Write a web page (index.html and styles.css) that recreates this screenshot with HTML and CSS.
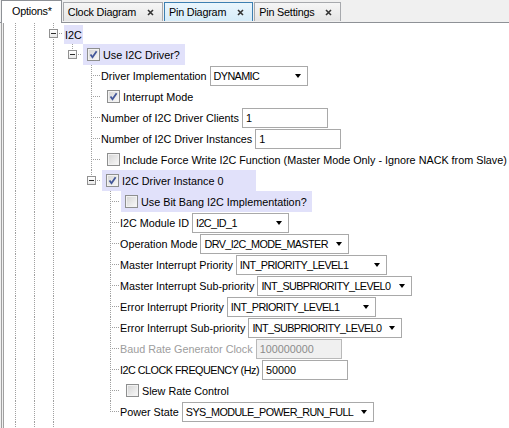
FILE: index.html
```html
<!DOCTYPE html>
<html lang="en">
<head>
    <meta charset="UTF-8">
    <title>Options</title>
    <link rel="stylesheet" href="styles.css">
</head>
<body>
    <div class="tabs">
        <div class="tab active">Options*</div>
        <div class="tab">Clock Diagram<svg class="close" width="7" height="7" viewBox="0 0 7 7"><path d="M1 1L6 6M6 1L1 6"/></svg></div>
        <div class="tab hover">Pin Diagram<svg class="close" width="7" height="7" viewBox="0 0 7 7"><path d="M1 1L6 6M6 1L1 6"/></svg></div>
        <div class="tab">Pin Settings<svg class="close" width="7" height="7" viewBox="0 0 7 7"><path d="M1 1L6 6M6 1L1 6"/></svg></div>
    </div>

    <div class="panel">
        <div class="tree">
            <div class="row"><i class="g v"></i><i class="g v"></i><i class="g t"><b class="exp"></b></i><span class="hl first">I2C</span></div>
            <div class="row"><i class="g v"></i><i class="g v"></i><i class="g v"></i><i class="g l"><b class="exp"></b></i>
                <span class="hl check"><b class="cb on"><svg width="11" height="11" viewBox="0 0 11 11"><path d="M2.5 5.5L4.5 8.2L8.6 2.3"/></svg></b>Use I2C Driver?</span></div>
            <div class="row"><i class="g v"></i><i class="g v"></i><i class="g v"></i><i class="g"></i><i class="g t"></i>
                <span class="label">Driver Implementation</span><span class="combo w98"><span>DYNAMIC</span><i class="arrow"></i></span></div>
            <div class="row"><i class="g v"></i><i class="g v"></i><i class="g v"></i><i class="g"></i><i class="g t"></i>
                <span class="check"><b class="cb on"><svg width="11" height="11" viewBox="0 0 11 11"><path d="M2.5 5.5L4.5 8.2L8.6 2.3"/></svg></b>Interrupt Mode</span></div>
            <div class="row"><i class="g v"></i><i class="g v"></i><i class="g v"></i><i class="g"></i><i class="g t"></i>
                <span class="label">Number of I2C Driver Clients</span><span class="field">1</span></div>
            <div class="row"><i class="g v"></i><i class="g v"></i><i class="g v"></i><i class="g"></i><i class="g t"></i>
                <span class="label">Number of I2C Driver Instances</span><span class="field">1</span></div>
            <div class="row"><i class="g v"></i><i class="g v"></i><i class="g v"></i><i class="g"></i><i class="g t"></i>
                <span class="check"><b class="cb"></b>Include Force Write I2C Function (Master Mode Only - Ignore NACK from Slave)</span></div>
            <div class="row"><i class="g v"></i><i class="g v"></i><i class="g v"></i><i class="g"></i><i class="g l"><b class="exp"></b></i>
                <span class="hl check wide"><b class="cb on"><svg width="11" height="11" viewBox="0 0 11 11"><path d="M2.5 5.5L4.5 8.2L8.6 2.3"/></svg></b>I2C Driver Instance 0</span></div>
            <div class="row"><i class="g v"></i><i class="g v"></i><i class="g v"></i><i class="g"></i><i class="g"></i><i class="g t"></i>
                <span class="hl check"><b class="cb"></b>Use Bit Bang I2C Implementation?</span></div>
            <div class="row"><i class="g v"></i><i class="g v"></i><i class="g v"></i><i class="g"></i><i class="g"></i><i class="g t"></i>
                <span class="label">I2C Module ID</span><span class="combo w97"><span>I2C_ID_1</span><i class="arrow"></i></span></div>
            <div class="row"><i class="g v"></i><i class="g v"></i><i class="g v"></i><i class="g"></i><i class="g"></i><i class="g t"></i>
                <span class="label">Operation Mode</span><span class="combo w147"><span>DRV_I2C_MODE_MASTER</span><i class="arrow"></i></span></div>
            <div class="row"><i class="g v"></i><i class="g v"></i><i class="g v"></i><i class="g"></i><i class="g"></i><i class="g t"></i>
                <span class="label">Master Interrupt Priority</span><span class="combo w151"><span>INT_PRIORITY_LEVEL1</span><i class="arrow"></i></span></div>
            <div class="row"><i class="g v"></i><i class="g v"></i><i class="g v"></i><i class="g"></i><i class="g"></i><i class="g t"></i>
                <span class="label">Master Interrupt Sub-priority</span><span class="combo w155"><span>INT_SUBPRIORITY_LEVEL0</span><i class="arrow"></i></span></div>
            <div class="row"><i class="g v"></i><i class="g v"></i><i class="g v"></i><i class="g"></i><i class="g"></i><i class="g t"></i>
                <span class="label">Error Interrupt Priority</span><span class="combo w149"><span>INT_PRIORITY_LEVEL1</span><i class="arrow"></i></span></div>
            <div class="row"><i class="g v"></i><i class="g v"></i><i class="g v"></i><i class="g"></i><i class="g"></i><i class="g t"></i>
                <span class="label">Error Interrupt Sub-priority</span><span class="combo w154"><span>INT_SUBPRIORITY_LEVEL0</span><i class="arrow"></i></span></div>
            <div class="row"><i class="g v"></i><i class="g v"></i><i class="g v"></i><i class="g"></i><i class="g"></i><i class="g t"></i>
                <span class="label disabled">Baud Rate Generator Clock</span><span class="field disabled">100000000</span></div>
            <div class="row"><i class="g v"></i><i class="g v"></i><i class="g v"></i><i class="g"></i><i class="g"></i><i class="g t"></i>
                <span class="label caps">I2C CLOCK FREQUENCY (Hz)</span><span class="field">50000</span></div>
            <div class="row"><i class="g v"></i><i class="g v"></i><i class="g v"></i><i class="g"></i><i class="g"></i><i class="g t"></i>
                <span class="check"><b class="cb"></b>Slew Rate Control</span></div>
            <div class="row"><i class="g v"></i><i class="g v"></i><i class="g v"></i><i class="g"></i><i class="g"></i><i class="g l"></i>
                <span class="label">Power State</span><span class="combo w192"><span>SYS_MODULE_POWER_RUN_FULL</span><i class="arrow"></i></span></div>
            <div class="row"><i class="g v"></i><i class="g v"></i><i class="g v"></i></div>
        </div>
    </div>
</body>
</html>
```

FILE: styles.css
```css
:root {
    --dotv: repeating-linear-gradient(to bottom, #a0a0a0 0 1px, transparent 1px 2px);
    --doth: repeating-linear-gradient(to right, #a0a0a0 0 1px, transparent 1px 2px);
}

body {
    margin: 0;
    height: 428px;
    overflow: hidden;
    background-color: #f0f0f0;
    font-family: "Liberation Sans", Arial, sans-serif;
    font-size: 10.8px;
    color: #000;
}

/* tab strip */
.tabs {
    display: flex;
    align-items: flex-end;
    height: 22px;
    padding-left: 1px;
    border-bottom: 1px solid #8e9196;
    letter-spacing: -0.2px;
}

.tab {
    display: flex;
    align-items: center;
    height: 18px;
    margin: 0 1px 1px 0;
    padding: 0 8px 0 4px;
    border: 1px solid #a7a9ad;
    border-bottom: none;
    background: linear-gradient(#f6f6f6, #e5e5e5);
}

.tab.active {
    height: 22px;
    margin-bottom: -1px;
    padding: 0 9px 0 10px;
    border-color: #8e9196;
    background: #fff;
    align-items: flex-start;
    line-height: 20px;
}

.tab.hover {
    border-color: #3c7fb1;
    background: linear-gradient(#eaf6fd, #d6ecf9);
}

.close {
    margin-left: 11px;
    stroke: #333;
    stroke-width: 1.6;
}

/* tree panel */
.panel {
    height: 405px;
    margin-left: 1px;
    padding-left: 1px;
    border-left: 1px solid #a0a0a0;
}

.tree {
    height: 100%;
    padding-left: 2px;
    border-left: 1px solid #a0a0a0;
    background-color: #fff;
}

.row {
    display: flex;
    align-items: center;
    height: 21px;
    white-space: nowrap;
}

.g {
    display: flex;
    align-items: center;
    flex: none;
    width: 19px;
    height: 21px;
}

.v {
    background: var(--dotv) 9px 0 / 1px 100% no-repeat;
}

.t {
    background: var(--dotv) 9px 0 / 1px 100% no-repeat, var(--doth) 9px 10px / 10px 1px no-repeat;
}

.l {
    background: var(--dotv) 9px 0 / 1px 11px no-repeat, var(--doth) 9px 10px / 10px 1px no-repeat;
}

.exp {
    width: 9px;
    height: 9px;
    margin-left: 5px;
    box-sizing: border-box;
    border: 1px solid #919191;
    background: linear-gradient(#2b2b2b, #2b2b2b) center / 5px 1px no-repeat, linear-gradient(#fff, #e8e8e8);
}

.hl {
    display: flex;
    align-items: center;
    align-self: stretch;
    margin-left: 1px;
    padding: 0 1px;
    background-color: #e1e1fa;
}

.hl.first {
    margin-top: 2px;
}

.check {
    display: flex;
    align-items: center;
    padding-left: 6px;
}

.hl.check {
    padding: 0 5px 0 4px;
}

.hl.wide {
    padding-right: 33px;
}

.cb {
    display: flex;
    align-items: center;
    justify-content: center;
    width: 13px;
    height: 13px;
    margin-right: 3px;
    box-sizing: border-box;
    border: 1px solid #8e8f8f;
    background: linear-gradient(135deg, #d3d3d3, #fafafa);
    box-shadow: inset 0 0 0 1px #f2f2f2;
}

.cb svg path {
    fill: none;
    stroke: #43579a;
    stroke-width: 1.8;
}

.label.disabled {
    color: #9d9d9d;
}

.label.caps {
    letter-spacing: -0.5px;
}

.field,
.combo {
    display: flex;
    align-items: center;
    align-self: flex-start;
    height: 20px;
    margin: 1px 0 0 3px;
    padding: 0 6px 0 3px;
    box-sizing: border-box;
    border: 1px solid #a9a9a9;
    background-color: #fff;
}

.field {
    width: 86px;
}

.field.disabled {
    border-color: #b9b9b9;
    background-color: #f0f0f0;
    color: #8b8b8b;
}

.combo {
    justify-content: space-between;
    letter-spacing: -0.6px;
}

.arrow {
    flex: none;
    margin-left: 8px;
    border-left: 3.5px solid transparent;
    border-right: 3.5px solid transparent;
    border-top: 4px solid #000;
}

.w97 { min-width: 97px; }
.w98 { min-width: 98px; }
.w147 { min-width: 147px; }
.w149 { min-width: 149px; }
.w151 { min-width: 151px; }
.w154 { min-width: 154px; }
.w155 { min-width: 155px; }
.w192 { min-width: 192px; }
```
